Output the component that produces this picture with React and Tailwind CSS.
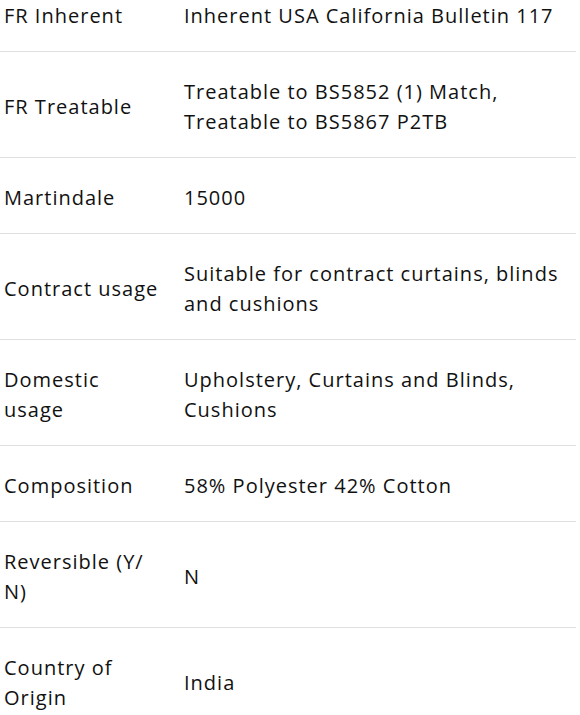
const rows = [
  ['FR Inherent', 'Inherent USA California Bulletin 117'],
  ['FR Treatable', 'Treatable to BS5852 (1) Match, Treatable to BS5867 P2TB'],
  ['Martindale', '15000'],
  ['Contract usage', 'Suitable for contract curtains, blinds and cushions'],
  ['Domestic usage', 'Upholstery, Curtains and Blinds, Cushions'],
  ['Composition', '58% Polyester 42% Cotton'],
  [<>Reversible (Y/<wbr />N)</>, 'N'],
  ['Country of Origin', 'India'],
];

export default function App() {
  return (
    <div className="w-[580px] h-[715px] overflow-hidden bg-white">
      <table
        className="w-[576px] -mt-[24px] border-collapse text-[20px] leading-[30px] tracking-[1px] text-[#111]"
        style={{ fontFamily: '"Open Sans", sans-serif' }}
      >
        <tbody>
          {rows.map(([label, value], i) => (
            <tr key={i} className="border-b border-[#e0e0e0]">
              <td className="w-[180px] pl-[4px] pr-[16px] pt-[25px] pb-[20px] align-middle">{label}</td>
              <td className="pl-[4px] pr-[4px] pt-[25px] pb-[20px] align-middle">{value}</td>
            </tr>
          ))}
        </tbody>
      </table>
    </div>
  );
}
